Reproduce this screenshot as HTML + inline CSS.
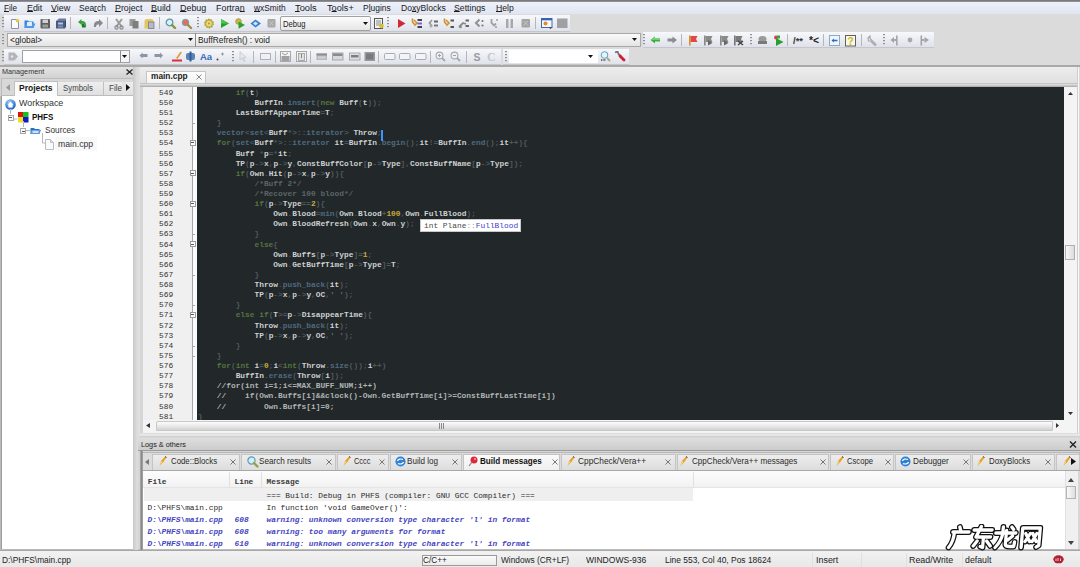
<!DOCTYPE html>
<html><head><meta charset="utf-8"><style>
html,body{margin:0;padding:0;width:1080px;height:567px;overflow:hidden;background:#dcdcdc}
body>div,body>span,body>svg{position:absolute;display:block}
span{white-space:pre}
b{font-weight:inherit}
</style></head><body>
<div style="left:0px;top:0px;width:1080px;height:2px;background:linear-gradient(#707074,#9a9a9e)"></div>
<div style="left:0px;top:2px;width:1080px;height:12px;background:linear-gradient(#eef1f9,#e0e5f2)"></div>
<span style="left:4.2px;top:3.77px;color:#1a1a1a;font-family:'Liberation Sans',sans-serif;font-size:8.3px;line-height:8.3px;transform:scaleX(0.9783);transform-origin:0 0;"><u style="text-decoration-thickness:0.8px;text-underline-offset:0px">F</u>ile</span>
<span style="left:26.7px;top:3.77px;color:#1a1a1a;font-family:'Liberation Sans',sans-serif;font-size:8.3px;line-height:8.3px;transform:scaleX(1.0690);transform-origin:0 0;"><u style="text-decoration-thickness:0.8px;text-underline-offset:0px">E</u>dit</span>
<span style="left:50.8px;top:3.77px;color:#1a1a1a;font-family:'Liberation Sans',sans-serif;font-size:8.3px;line-height:8.3px;transform:scaleX(1.0760);transform-origin:0 0;"><u style="text-decoration-thickness:0.8px;text-underline-offset:0px">V</u>iew</span>
<span style="left:78.7px;top:3.77px;color:#1a1a1a;font-family:'Liberation Sans',sans-serif;font-size:8.3px;line-height:8.3px;transform:scaleX(1.0229);transform-origin:0 0;">Sea<u style="text-decoration-thickness:0.8px;text-underline-offset:0px">r</u>ch</span>
<span style="left:114.5px;top:3.77px;color:#1a1a1a;font-family:'Liberation Sans',sans-serif;font-size:8.3px;line-height:8.3px;transform:scaleX(1.0641);transform-origin:0 0;"><u style="text-decoration-thickness:0.8px;text-underline-offset:0px">P</u>roject</span>
<span style="left:150.8px;top:3.77px;color:#1a1a1a;font-family:'Liberation Sans',sans-serif;font-size:8.3px;line-height:8.3px;transform:scaleX(1.0721);transform-origin:0 0;"><u style="text-decoration-thickness:0.8px;text-underline-offset:0px">B</u>uild</span>
<span style="left:179.8px;top:3.77px;color:#1a1a1a;font-family:'Liberation Sans',sans-serif;font-size:8.3px;line-height:8.3px;transform:scaleX(1.0748);transform-origin:0 0;"><u style="text-decoration-thickness:0.8px;text-underline-offset:0px">D</u>ebug</span>
<span style="left:215.8px;top:3.77px;color:#1a1a1a;font-family:'Liberation Sans',sans-serif;font-size:8.3px;line-height:8.3px;transform:scaleX(1.0723);transform-origin:0 0;">Fortra<u style="text-decoration-thickness:0.8px;text-underline-offset:0px">n</u></span>
<span style="left:253.7px;top:3.77px;color:#1a1a1a;font-family:'Liberation Sans',sans-serif;font-size:8.3px;line-height:8.3px;transform:scaleX(1.0077);transform-origin:0 0;"><u style="text-decoration-thickness:0.8px;text-underline-offset:0px">w</u>xSmith</span>
<span style="left:294.8px;top:3.77px;color:#1a1a1a;font-family:'Liberation Sans',sans-serif;font-size:8.3px;line-height:8.3px;transform:scaleX(1.1243);transform-origin:0 0;"><u style="text-decoration-thickness:0.8px;text-underline-offset:0px">T</u>ools</span>
<span style="left:326.5px;top:3.77px;color:#1a1a1a;font-family:'Liberation Sans',sans-serif;font-size:8.3px;line-height:8.3px;transform:scaleX(1.1059);transform-origin:0 0;">T<u style="text-decoration-thickness:0.8px;text-underline-offset:0px">o</u>ols+</span>
<span style="left:363.0px;top:3.77px;color:#1a1a1a;font-family:'Liberation Sans',sans-serif;font-size:8.3px;line-height:8.3px;transform:scaleX(1.0171);transform-origin:0 0;">P<u style="text-decoration-thickness:0.8px;text-underline-offset:0px">l</u>ugins</span>
<span style="left:400.5px;top:3.77px;color:#1a1a1a;font-family:'Liberation Sans',sans-serif;font-size:8.3px;line-height:8.3px;transform:scaleX(1.0332);transform-origin:0 0;">Do<u style="text-decoration-thickness:0.8px;text-underline-offset:0px">x</u>yBlocks</span>
<span style="left:454.3px;top:3.77px;color:#1a1a1a;font-family:'Liberation Sans',sans-serif;font-size:8.3px;line-height:8.3px;transform:scaleX(1.0467);transform-origin:0 0;"><u style="text-decoration-thickness:0.8px;text-underline-offset:0px">S</u>ettings</span>
<span style="left:495.5px;top:3.77px;color:#1a1a1a;font-family:'Liberation Sans',sans-serif;font-size:8.3px;line-height:8.3px;transform:scaleX(1.0423);transform-origin:0 0;"><u style="text-decoration-thickness:0.8px;text-underline-offset:0px">H</u>elp</span>
<div style="left:0px;top:14px;width:1080px;height:51px;background:#dbdbdb"></div>
<div style="left:4px;top:15px;width:566px;height:16px;background:linear-gradient(#f7f8fb,#e9ebf1 60%,#dfe2ea);"></div>
<div style="left:4px;top:31px;width:566px;height:1px;background:#c4c6cc"></div>
<svg style="left:2px;top:17px" width="2" height="12" viewBox="0 0 2 12"><rect x="0" y="0" width="2" height="1.2" fill="#8e9098"/><rect x="0" y="3" width="2" height="1.2" fill="#8e9098"/><rect x="0" y="6" width="2" height="1.2" fill="#8e9098"/><rect x="0" y="9" width="2" height="1.2" fill="#8e9098"/></svg>
<div style="left:7px;top:33px;width:634px;height:14px;background:linear-gradient(#fafafa,#e4e4e4);border:1px solid #a8a8a8;box-sizing:border-box"></div>
<div style="left:195px;top:33px;width:1px;height:14px;background:#8a8a8a"></div>
<svg style="left:188px;top:38px" width="5" height="3" viewBox="0 0 5 3"><path d="M0 0H5L2.5 3Z" fill="#111"/></svg>
<svg style="left:632px;top:38px" width="5" height="3" viewBox="0 0 5 3"><path d="M0 0H5L2.5 3Z" fill="#111"/></svg>
<span style="left:9.6px;top:35.97px;color:#222;font-family:'Liberation Sans',sans-serif;font-size:8.3px;line-height:8.3px;transform:scaleX(1.0112);transform-origin:0 0;">&lt;global&gt;</span>
<span style="left:198.4px;top:35.97px;color:#222;font-family:'Liberation Sans',sans-serif;font-size:8.3px;line-height:8.3px;transform:scaleX(1.0066);transform-origin:0 0;">BuffRefresh() : void</span>
<svg style="left:2px;top:34px" width="2" height="12" viewBox="0 0 2 12"><rect x="0" y="0" width="2" height="1.2" fill="#8e9098"/><rect x="0" y="3" width="2" height="1.2" fill="#8e9098"/><rect x="0" y="6" width="2" height="1.2" fill="#8e9098"/><rect x="0" y="9" width="2" height="1.2" fill="#8e9098"/></svg>
<div style="left:643px;top:32px;width:291px;height:15px;background:linear-gradient(#f7f8fb,#e9ebf1 60%,#dfe2ea);"></div>
<div style="left:643px;top:47px;width:291px;height:1px;background:#c4c6cc"></div>
<svg style="left:643px;top:34px" width="2" height="12" viewBox="0 0 2 12"><rect x="0" y="0" width="2" height="1.2" fill="#8e9098"/><rect x="0" y="3" width="2" height="1.2" fill="#8e9098"/><rect x="0" y="6" width="2" height="1.2" fill="#8e9098"/><rect x="0" y="9" width="2" height="1.2" fill="#8e9098"/></svg>
<div style="left:4px;top:49px;width:497px;height:15px;background:linear-gradient(#f7f8fb,#e9ebf1 60%,#dfe2ea);"></div>
<div style="left:4px;top:64px;width:497px;height:1px;background:#c4c6cc"></div>
<svg style="left:2px;top:51px" width="2" height="12" viewBox="0 0 2 12"><rect x="0" y="0" width="2" height="1.2" fill="#8e9098"/><rect x="0" y="3" width="2" height="1.2" fill="#8e9098"/><rect x="0" y="6" width="2" height="1.2" fill="#8e9098"/><rect x="0" y="9" width="2" height="1.2" fill="#8e9098"/></svg>
<div style="left:22px;top:50px;width:108px;height:13px;background:#fff;border:1px solid #a0a0a0;box-sizing:border-box"></div>
<div style="left:120px;top:51px;width:9px;height:11px;background:#f4f4f4;border-left:1px solid #909090;box-sizing:border-box"></div>
<svg style="left:122px;top:55px" width="5" height="3" viewBox="0 0 5 3"><path d="M0 0H5L2.5 3Z" fill="#111"/></svg>
<div style="left:503px;top:49px;width:126px;height:15px;background:linear-gradient(#f7f8fb,#e9ebf1 60%,#dfe2ea);"></div>
<div style="left:503px;top:64px;width:126px;height:1px;background:#c4c6cc"></div>
<svg style="left:505px;top:51px" width="2" height="12" viewBox="0 0 2 12"><rect x="0" y="0" width="2" height="1.2" fill="#8e9098"/><rect x="0" y="3" width="2" height="1.2" fill="#8e9098"/><rect x="0" y="6" width="2" height="1.2" fill="#8e9098"/><rect x="0" y="9" width="2" height="1.2" fill="#8e9098"/></svg>
<div style="left:509px;top:50px;width:89px;height:13px;background:#fff"></div>
<svg style="left:588px;top:55px" width="5" height="3" viewBox="0 0 5 3"><path d="M0 0H5L2.5 3Z" fill="#111"/></svg>
<div style="left:0px;top:65px;width:1080px;height:2px;background:#a9a9a9"></div>
<div style="left:0px;top:67px;width:140px;height:484px;background:#d4d4d4"></div>
<div style="left:0px;top:67px;width:134px;height:11px;background:linear-gradient(#e4e4e4,#d2d2d2)"></div>
<span style="left:1.9px;top:67.92px;color:#333;font-family:'Liberation Sans',sans-serif;font-size:7.3px;line-height:7.3px;transform:scaleX(0.9908);transform-origin:0 0;">Management</span>
<svg style="left:126px;top:69px" width="7" height="6" viewBox="0 0 7 6"><path d="M0.5 0.5L6.5 5.5M6.5 0.5L0.5 5.5" stroke="#222" stroke-width="1.3"/></svg>
<div style="left:1px;top:78px;width:133px;height:18px;background:#d8d8d8;border:1px solid #bcbcbc;box-sizing:border-box"></div>
<div style="left:14px;top:81px;width:44px;height:15px;background:#fbfbfb;border:1px solid #c0c0c0;border-bottom:none;box-sizing:border-box"></div>
<div style="left:58px;top:82px;width:46px;height:13px;background:linear-gradient(#eeeeee,#e0e0e0);border-right:1px solid #c0c0c0;box-sizing:border-box"></div>
<div style="left:104px;top:82px;width:29px;height:13px;background:linear-gradient(#eeeeee,#e0e0e0)"></div>
<svg style="left:6px;top:84px" width="4" height="7" viewBox="0 0 4 7"><path d="M4 0L0 3.5L4 7Z" fill="#999"/></svg>
<svg style="left:126px;top:84px" width="4" height="7" viewBox="0 0 4 7"><path d="M0 0L4 3.5L0 7Z" fill="#111"/></svg>
<span style="left:19.2px;top:83.57px;color:#1a1a1a;font-family:'Liberation Sans',sans-serif;font-size:8.3px;line-height:8.3px;font-weight:bold;transform:scaleX(1.0229);transform-origin:0 0;">Projects</span>
<span style="left:63.3px;top:83.57px;color:#444;font-family:'Liberation Sans',sans-serif;font-size:8.3px;line-height:8.3px;transform:scaleX(0.9426);transform-origin:0 0;">Symbols</span>
<span style="left:108.5px;top:83.57px;color:#444;font-family:'Liberation Sans',sans-serif;font-size:8.3px;line-height:8.3px;transform:scaleX(0.9697);transform-origin:0 0;">Files</span>
<div style="left:122px;top:82px;width:4px;height:13px;background:#e4e4e4"></div>
<div style="left:2px;top:96px;width:131px;height:453px;background:#fff"></div>
<div style="left:0px;top:96px;width:2px;height:455px;background:linear-gradient(90deg,#c8c8c8,#8e8e8e)"></div>
<div style="left:0px;top:549px;width:140px;height:2px;background:linear-gradient(#b0b0b0,#d8d8d8)"></div>
<div style="left:133px;top:67px;width:7px;height:484px;background:linear-gradient(90deg,#c8c8c8,#dadada 50%,#e2e2e2)"></div>
<div style="left:139.5px;top:67px;width:3.5px;height:370px;background:linear-gradient(90deg,#a0a0a0,#7e7e7e,#9a9a9a)"></div>
<span style="left:18.9px;top:99.48px;color:#333;font-family:'Liberation Sans',sans-serif;font-size:9px;line-height:9px;transform:scaleX(0.9875);transform-origin:0 0;">Workspace</span>
<span style="left:31.9px;top:112.74px;color:#111;font-family:'Liberation Sans',sans-serif;font-size:8.7px;line-height:8.7px;font-weight:bold;transform:scaleX(0.9192);transform-origin:0 0;">PHFS</span>
<span style="left:45px;top:126.28px;color:#333;font-family:'Liberation Sans',sans-serif;font-size:9px;line-height:9px;transform:scaleX(0.9143);transform-origin:0 0;">Sources</span>
<div style="left:55px;top:137px;width:42px;height:14px;background:#f8f8f8"></div>
<span style="left:57.8px;top:139.58px;color:#333;font-family:'Liberation Sans',sans-serif;font-size:9px;line-height:9px;transform:scaleX(0.9636);transform-origin:0 0;">main.cpp</span>
<div style="left:140px;top:67px;width:940px;height:370px;background:#d6d6d6"></div>
<div style="left:140px;top:67px;width:940px;height:19px;background:linear-gradient(#ededed,#dedede)"></div>
<div style="left:146px;top:71px;width:60px;height:14px;background:linear-gradient(#fdfdfd,#f1f1f1);border:1px solid #c6c6c6;border-bottom:none;box-sizing:border-box"></div>
<span style="left:150.7px;top:72.08px;color:#202020;font-family:'Liberation Sans',sans-serif;font-size:9px;line-height:9px;font-weight:bold;transform:scaleX(0.9262);transform-origin:0 0;">main.cpp</span>
<svg style="left:196px;top:74px" width="6" height="6" viewBox="0 0 6 6"><path d="M0.5 0.5L5.5 5.5M5.5 0.5L0.5 5.5" stroke="#888" stroke-width="1"/></svg>
<div style="left:140px;top:83px;width:940px;height:1px;background:#c4c4c4"></div>
<div style="left:140px;top:84px;width:940px;height:3px;background:linear-gradient(#e6e6e6,#a8a8a8)"></div>
<div style="left:143px;top:87px;width:49px;height:333px;background:#f0f0f0"></div>
<div style="left:192px;top:87px;width:1px;height:333px;background:#a8a8a8"></div>
<div style="left:193px;top:87px;width:4px;height:333px;background:#fcfcfc"></div>
<div style="left:197px;top:87px;width:867px;height:333px;background:#222729"></div>
<div style="left:1064px;top:87px;width:13px;height:346px;background:#f4f4f4"></div>
<div style="left:1077px;top:67px;width:3px;height:370px;background:linear-gradient(90deg,#b8b8b8,#f8f8f8,#c8c8c8)"></div>
<span style="left:159px;top:88.78px;color:#333;font-family:'Liberation Mono',monospace;font-size:7.85px;line-height:7.85px;">549</span>
<span style="left:198px;top:88.78px;color:#ddd;font-family:'Liberation Mono',monospace;font-size:7.85px;line-height:7.85px;font-weight:bold;">        <b style="color:#56743f">if</b><b style="color:#4e595c">(</b><b style="color:#cdd0d0">t</b><b style="color:#4e595c">)</b></span>
<span style="left:159px;top:98.9px;color:#333;font-family:'Liberation Mono',monospace;font-size:7.85px;line-height:7.85px;">550</span>
<span style="left:198px;top:98.9px;color:#ddd;font-family:'Liberation Mono',monospace;font-size:7.85px;line-height:7.85px;font-weight:bold;">            <b style="color:#cdd0d0">BuffIn</b><b style="color:#4e595c">.</b><b style="color:#4e6a80">insert</b><b style="color:#4e595c">(</b><b style="color:#56743f">new</b> <b style="color:#cdd0d0">Buff</b><b style="color:#4e595c">(</b><b style="color:#cdd0d0">t</b><b style="color:#4e595c">)</b><b style="color:#4e595c">)</b><b style="color:#4e595c">;</b></span>
<span style="left:159px;top:109.02px;color:#333;font-family:'Liberation Mono',monospace;font-size:7.85px;line-height:7.85px;">551</span>
<span style="left:198px;top:109.02px;color:#ddd;font-family:'Liberation Mono',monospace;font-size:7.85px;line-height:7.85px;font-weight:bold;">        <b style="color:#cdd0d0">LastBuffAppearTime</b><b style="color:#4e595c">=</b><b style="color:#cdd0d0">T</b><b style="color:#4e595c">;</b></span>
<span style="left:159px;top:119.14px;color:#333;font-family:'Liberation Mono',monospace;font-size:7.85px;line-height:7.85px;">552</span>
<span style="left:198px;top:119.14px;color:#ddd;font-family:'Liberation Mono',monospace;font-size:7.85px;line-height:7.85px;font-weight:bold;">    <b style="color:#4e595c">}</b></span>
<span style="left:159px;top:129.26px;color:#333;font-family:'Liberation Mono',monospace;font-size:7.85px;line-height:7.85px;">553</span>
<span style="left:198px;top:129.26px;color:#ddd;font-family:'Liberation Mono',monospace;font-size:7.85px;line-height:7.85px;font-weight:bold;">    <b style="color:#4e6a80">vector</b><b style="color:#4e595c">&lt;</b><b style="color:#4e6a80">set</b><b style="color:#4e595c">&lt;</b><b style="color:#cdd0d0">Buff</b><b style="color:#4e595c">*</b><b style="color:#4e595c">&gt;</b><b style="color:#4e595c">:</b><b style="color:#4e595c">:</b><b style="color:#4e6a80">iterator</b><b style="color:#4e595c">&gt;</b> <b style="color:#cdd0d0">Throw</b><b style="color:#4e595c">;</b></span>
<span style="left:159px;top:139.38px;color:#333;font-family:'Liberation Mono',monospace;font-size:7.85px;line-height:7.85px;">554</span>
<span style="left:198px;top:139.38px;color:#ddd;font-family:'Liberation Mono',monospace;font-size:7.85px;line-height:7.85px;font-weight:bold;">    <b style="color:#56743f">for</b><b style="color:#4e595c">(</b><b style="color:#4e6a80">set</b><b style="color:#4e595c">&lt;</b><b style="color:#cdd0d0">Buff</b><b style="color:#4e595c">*</b><b style="color:#4e595c">&gt;</b><b style="color:#4e595c">:</b><b style="color:#4e595c">:</b><b style="color:#4e6a80">iterator</b> <b style="color:#cdd0d0">it</b><b style="color:#4e595c">=</b><b style="color:#cdd0d0">BuffIn</b><b style="color:#4e595c">.</b><b style="color:#4e6a80">begin</b><b style="color:#4e595c">(</b><b style="color:#4e595c">)</b><b style="color:#4e595c">;</b><b style="color:#cdd0d0">it</b><b style="color:#4e595c">!</b><b style="color:#4e595c">=</b><b style="color:#cdd0d0">BuffIn</b><b style="color:#4e595c">.</b><b style="color:#4e6a80">end</b><b style="color:#4e595c">(</b><b style="color:#4e595c">)</b><b style="color:#4e595c">;</b><b style="color:#cdd0d0">it</b><b style="color:#4e595c">+</b><b style="color:#4e595c">+</b><b style="color:#4e595c">)</b><b style="color:#4e595c">{</b></span>
<span style="left:159px;top:149.5px;color:#333;font-family:'Liberation Mono',monospace;font-size:7.85px;line-height:7.85px;">555</span>
<span style="left:198px;top:149.5px;color:#ddd;font-family:'Liberation Mono',monospace;font-size:7.85px;line-height:7.85px;font-weight:bold;">        <b style="color:#cdd0d0">Buff</b> <b style="color:#4e595c">*</b><b style="color:#cdd0d0">p</b><b style="color:#4e595c">=</b><b style="color:#4e595c">*</b><b style="color:#cdd0d0">it</b><b style="color:#4e595c">;</b></span>
<span style="left:159px;top:159.62px;color:#333;font-family:'Liberation Mono',monospace;font-size:7.85px;line-height:7.85px;">556</span>
<span style="left:198px;top:159.62px;color:#ddd;font-family:'Liberation Mono',monospace;font-size:7.85px;line-height:7.85px;font-weight:bold;">        <b style="color:#cdd0d0">TP</b><b style="color:#4e595c">(</b><b style="color:#cdd0d0">p</b><b style="color:#4e595c">-</b><b style="color:#4e595c">&gt;</b><b style="color:#cdd0d0">x</b><b style="color:#4e595c">,</b><b style="color:#cdd0d0">p</b><b style="color:#4e595c">-</b><b style="color:#4e595c">&gt;</b><b style="color:#cdd0d0">y</b><b style="color:#4e595c">,</b><b style="color:#cdd0d0">ConstBuffColor</b><b style="color:#4e595c">[</b><b style="color:#cdd0d0">p</b><b style="color:#4e595c">-</b><b style="color:#4e595c">&gt;</b><b style="color:#cdd0d0">Type</b><b style="color:#4e595c">]</b><b style="color:#4e595c">,</b><b style="color:#cdd0d0">ConstBuffName</b><b style="color:#4e595c">[</b><b style="color:#cdd0d0">p</b><b style="color:#4e595c">-</b><b style="color:#4e595c">&gt;</b><b style="color:#cdd0d0">Type</b><b style="color:#4e595c">]</b><b style="color:#4e595c">)</b><b style="color:#4e595c">;</b></span>
<span style="left:159px;top:169.74px;color:#333;font-family:'Liberation Mono',monospace;font-size:7.85px;line-height:7.85px;">557</span>
<span style="left:198px;top:169.74px;color:#ddd;font-family:'Liberation Mono',monospace;font-size:7.85px;line-height:7.85px;font-weight:bold;">        <b style="color:#56743f">if</b><b style="color:#4e595c">(</b><b style="color:#cdd0d0">Own</b><b style="color:#4e595c">.</b><b style="color:#cdd0d0">Hit</b><b style="color:#4e595c">(</b><b style="color:#cdd0d0">p</b><b style="color:#4e595c">-</b><b style="color:#4e595c">&gt;</b><b style="color:#cdd0d0">x</b><b style="color:#4e595c">,</b><b style="color:#cdd0d0">p</b><b style="color:#4e595c">-</b><b style="color:#4e595c">&gt;</b><b style="color:#cdd0d0">y</b><b style="color:#4e595c">)</b><b style="color:#4e595c">)</b><b style="color:#4e595c">{</b></span>
<span style="left:159px;top:179.86px;color:#333;font-family:'Liberation Mono',monospace;font-size:7.85px;line-height:7.85px;">558</span>
<span style="left:198px;top:179.86px;color:#ddd;font-family:'Liberation Mono',monospace;font-size:7.85px;line-height:7.85px;font-weight:bold;">            <b style="color:#5c6567">/*Buff 2*/</b></span>
<span style="left:159px;top:189.98px;color:#333;font-family:'Liberation Mono',monospace;font-size:7.85px;line-height:7.85px;">559</span>
<span style="left:198px;top:189.98px;color:#ddd;font-family:'Liberation Mono',monospace;font-size:7.85px;line-height:7.85px;font-weight:bold;">            <b style="color:#5c6567">/*Recover 100 blood*/</b></span>
<span style="left:159px;top:200.1px;color:#333;font-family:'Liberation Mono',monospace;font-size:7.85px;line-height:7.85px;">560</span>
<span style="left:198px;top:200.1px;color:#ddd;font-family:'Liberation Mono',monospace;font-size:7.85px;line-height:7.85px;font-weight:bold;">            <b style="color:#56743f">if</b><b style="color:#4e595c">(</b><b style="color:#cdd0d0">p</b><b style="color:#4e595c">-</b><b style="color:#4e595c">&gt;</b><b style="color:#cdd0d0">Type</b><b style="color:#4e595c">=</b><b style="color:#4e595c">=</b><b style="color:#c9a93a">2</b><b style="color:#4e595c">)</b><b style="color:#4e595c">{</b></span>
<span style="left:159px;top:210.22px;color:#333;font-family:'Liberation Mono',monospace;font-size:7.85px;line-height:7.85px;">561</span>
<span style="left:198px;top:210.22px;color:#ddd;font-family:'Liberation Mono',monospace;font-size:7.85px;line-height:7.85px;font-weight:bold;">                <b style="color:#cdd0d0">Own</b><b style="color:#4e595c">.</b><b style="color:#cdd0d0">Blood</b><b style="color:#4e595c">=</b><b style="color:#4e6a80">min</b><b style="color:#4e595c">(</b><b style="color:#cdd0d0">Own</b><b style="color:#4e595c">.</b><b style="color:#cdd0d0">Blood</b><b style="color:#4e595c">+</b><b style="color:#c9a93a">100</b><b style="color:#4e595c">,</b><b style="color:#cdd0d0">Own</b><b style="color:#4e595c">.</b><b style="color:#cdd0d0">FullBlood</b><b style="color:#4e595c">)</b><b style="color:#4e595c">;</b></span>
<span style="left:159px;top:220.34px;color:#333;font-family:'Liberation Mono',monospace;font-size:7.85px;line-height:7.85px;">562</span>
<span style="left:198px;top:220.34px;color:#ddd;font-family:'Liberation Mono',monospace;font-size:7.85px;line-height:7.85px;font-weight:bold;">                <b style="color:#cdd0d0">Own</b><b style="color:#4e595c">.</b><b style="color:#cdd0d0">BloodRefresh</b><b style="color:#4e595c">(</b><b style="color:#cdd0d0">Own</b><b style="color:#4e595c">.</b><b style="color:#cdd0d0">x</b><b style="color:#4e595c">,</b><b style="color:#cdd0d0">Own</b><b style="color:#4e595c">.</b><b style="color:#cdd0d0">y</b><b style="color:#4e595c">)</b><b style="color:#4e595c">;</b></span>
<span style="left:159px;top:230.46px;color:#333;font-family:'Liberation Mono',monospace;font-size:7.85px;line-height:7.85px;">563</span>
<span style="left:198px;top:230.46px;color:#ddd;font-family:'Liberation Mono',monospace;font-size:7.85px;line-height:7.85px;font-weight:bold;">            <b style="color:#4e595c">}</b></span>
<span style="left:159px;top:240.58px;color:#333;font-family:'Liberation Mono',monospace;font-size:7.85px;line-height:7.85px;">564</span>
<span style="left:198px;top:240.58px;color:#ddd;font-family:'Liberation Mono',monospace;font-size:7.85px;line-height:7.85px;font-weight:bold;">            <b style="color:#56743f">else</b><b style="color:#4e595c">{</b></span>
<span style="left:159px;top:250.7px;color:#333;font-family:'Liberation Mono',monospace;font-size:7.85px;line-height:7.85px;">565</span>
<span style="left:198px;top:250.7px;color:#ddd;font-family:'Liberation Mono',monospace;font-size:7.85px;line-height:7.85px;font-weight:bold;">                <b style="color:#cdd0d0">Own</b><b style="color:#4e595c">.</b><b style="color:#cdd0d0">Buffs</b><b style="color:#4e595c">[</b><b style="color:#cdd0d0">p</b><b style="color:#4e595c">-</b><b style="color:#4e595c">&gt;</b><b style="color:#cdd0d0">Type</b><b style="color:#4e595c">]</b><b style="color:#4e595c">=</b><b style="color:#c9a93a">1</b><b style="color:#4e595c">;</b></span>
<span style="left:159px;top:260.82px;color:#333;font-family:'Liberation Mono',monospace;font-size:7.85px;line-height:7.85px;">566</span>
<span style="left:198px;top:260.82px;color:#ddd;font-family:'Liberation Mono',monospace;font-size:7.85px;line-height:7.85px;font-weight:bold;">                <b style="color:#cdd0d0">Own</b><b style="color:#4e595c">.</b><b style="color:#cdd0d0">GetBuffTime</b><b style="color:#4e595c">[</b><b style="color:#cdd0d0">p</b><b style="color:#4e595c">-</b><b style="color:#4e595c">&gt;</b><b style="color:#cdd0d0">Type</b><b style="color:#4e595c">]</b><b style="color:#4e595c">=</b><b style="color:#cdd0d0">T</b><b style="color:#4e595c">;</b></span>
<span style="left:159px;top:270.94px;color:#333;font-family:'Liberation Mono',monospace;font-size:7.85px;line-height:7.85px;">567</span>
<span style="left:198px;top:270.94px;color:#ddd;font-family:'Liberation Mono',monospace;font-size:7.85px;line-height:7.85px;font-weight:bold;">            <b style="color:#4e595c">}</b></span>
<span style="left:159px;top:281.06px;color:#333;font-family:'Liberation Mono',monospace;font-size:7.85px;line-height:7.85px;">568</span>
<span style="left:198px;top:281.06px;color:#ddd;font-family:'Liberation Mono',monospace;font-size:7.85px;line-height:7.85px;font-weight:bold;">            <b style="color:#cdd0d0">Throw</b><b style="color:#4e595c">.</b><b style="color:#4e6a80">push_back</b><b style="color:#4e595c">(</b><b style="color:#cdd0d0">it</b><b style="color:#4e595c">)</b><b style="color:#4e595c">;</b></span>
<span style="left:159px;top:291.18px;color:#333;font-family:'Liberation Mono',monospace;font-size:7.85px;line-height:7.85px;">569</span>
<span style="left:198px;top:291.18px;color:#ddd;font-family:'Liberation Mono',monospace;font-size:7.85px;line-height:7.85px;font-weight:bold;">            <b style="color:#cdd0d0">TP</b><b style="color:#4e595c">(</b><b style="color:#cdd0d0">p</b><b style="color:#4e595c">-</b><b style="color:#4e595c">&gt;</b><b style="color:#cdd0d0">x</b><b style="color:#4e595c">,</b><b style="color:#cdd0d0">p</b><b style="color:#4e595c">-</b><b style="color:#4e595c">&gt;</b><b style="color:#cdd0d0">y</b><b style="color:#4e595c">,</b><b style="color:#cdd0d0">OC</b><b style="color:#4e595c">,</b><b style="color:#6a7070">&#x27; &#x27;</b><b style="color:#4e595c">)</b><b style="color:#4e595c">;</b></span>
<span style="left:159px;top:301.3px;color:#333;font-family:'Liberation Mono',monospace;font-size:7.85px;line-height:7.85px;">570</span>
<span style="left:198px;top:301.3px;color:#ddd;font-family:'Liberation Mono',monospace;font-size:7.85px;line-height:7.85px;font-weight:bold;">        <b style="color:#4e595c">}</b></span>
<span style="left:159px;top:311.42px;color:#333;font-family:'Liberation Mono',monospace;font-size:7.85px;line-height:7.85px;">571</span>
<span style="left:198px;top:311.42px;color:#ddd;font-family:'Liberation Mono',monospace;font-size:7.85px;line-height:7.85px;font-weight:bold;">        <b style="color:#56743f">else</b> <b style="color:#56743f">if</b><b style="color:#4e595c">(</b><b style="color:#cdd0d0">T</b><b style="color:#4e595c">&gt;</b><b style="color:#4e595c">=</b><b style="color:#cdd0d0">p</b><b style="color:#4e595c">-</b><b style="color:#4e595c">&gt;</b><b style="color:#cdd0d0">DisappearTime</b><b style="color:#4e595c">)</b><b style="color:#4e595c">{</b></span>
<span style="left:159px;top:321.54px;color:#333;font-family:'Liberation Mono',monospace;font-size:7.85px;line-height:7.85px;">572</span>
<span style="left:198px;top:321.54px;color:#ddd;font-family:'Liberation Mono',monospace;font-size:7.85px;line-height:7.85px;font-weight:bold;">            <b style="color:#cdd0d0">Throw</b><b style="color:#4e595c">.</b><b style="color:#4e6a80">push_back</b><b style="color:#4e595c">(</b><b style="color:#cdd0d0">it</b><b style="color:#4e595c">)</b><b style="color:#4e595c">;</b></span>
<span style="left:159px;top:331.66px;color:#333;font-family:'Liberation Mono',monospace;font-size:7.85px;line-height:7.85px;">573</span>
<span style="left:198px;top:331.66px;color:#ddd;font-family:'Liberation Mono',monospace;font-size:7.85px;line-height:7.85px;font-weight:bold;">            <b style="color:#cdd0d0">TP</b><b style="color:#4e595c">(</b><b style="color:#cdd0d0">p</b><b style="color:#4e595c">-</b><b style="color:#4e595c">&gt;</b><b style="color:#cdd0d0">x</b><b style="color:#4e595c">,</b><b style="color:#cdd0d0">p</b><b style="color:#4e595c">-</b><b style="color:#4e595c">&gt;</b><b style="color:#cdd0d0">y</b><b style="color:#4e595c">,</b><b style="color:#cdd0d0">OC</b><b style="color:#4e595c">,</b><b style="color:#6a7070">&#x27; &#x27;</b><b style="color:#4e595c">)</b><b style="color:#4e595c">;</b></span>
<span style="left:159px;top:341.78px;color:#333;font-family:'Liberation Mono',monospace;font-size:7.85px;line-height:7.85px;">574</span>
<span style="left:198px;top:341.78px;color:#ddd;font-family:'Liberation Mono',monospace;font-size:7.85px;line-height:7.85px;font-weight:bold;">        <b style="color:#4e595c">}</b></span>
<span style="left:159px;top:351.9px;color:#333;font-family:'Liberation Mono',monospace;font-size:7.85px;line-height:7.85px;">575</span>
<span style="left:198px;top:351.9px;color:#ddd;font-family:'Liberation Mono',monospace;font-size:7.85px;line-height:7.85px;font-weight:bold;">    <b style="color:#4e595c">}</b></span>
<span style="left:159px;top:362.02px;color:#333;font-family:'Liberation Mono',monospace;font-size:7.85px;line-height:7.85px;">576</span>
<span style="left:198px;top:362.02px;color:#ddd;font-family:'Liberation Mono',monospace;font-size:7.85px;line-height:7.85px;font-weight:bold;">    <b style="color:#56743f">for</b><b style="color:#4e595c">(</b><b style="color:#56743f">int</b> <b style="color:#cdd0d0">i</b><b style="color:#4e595c">=</b><b style="color:#c9a93a">0</b><b style="color:#4e595c">;</b><b style="color:#cdd0d0">i</b><b style="color:#4e595c">&lt;</b><b style="color:#56743f">int</b><b style="color:#4e595c">(</b><b style="color:#cdd0d0">Throw</b><b style="color:#4e595c">.</b><b style="color:#4e6a80">size</b><b style="color:#4e595c">(</b><b style="color:#4e595c">)</b><b style="color:#4e595c">)</b><b style="color:#4e595c">;</b><b style="color:#cdd0d0">i</b><b style="color:#4e595c">+</b><b style="color:#4e595c">+</b><b style="color:#4e595c">)</b></span>
<span style="left:159px;top:372.14px;color:#333;font-family:'Liberation Mono',monospace;font-size:7.85px;line-height:7.85px;">577</span>
<span style="left:198px;top:372.14px;color:#ddd;font-family:'Liberation Mono',monospace;font-size:7.85px;line-height:7.85px;font-weight:bold;">        <b style="color:#cdd0d0">BuffIn</b><b style="color:#4e595c">.</b><b style="color:#4e6a80">erase</b><b style="color:#4e595c">(</b><b style="color:#cdd0d0">Throw</b><b style="color:#4e595c">[</b><b style="color:#cdd0d0">i</b><b style="color:#4e595c">]</b><b style="color:#4e595c">)</b><b style="color:#4e595c">;</b></span>
<span style="left:159px;top:382.26px;color:#333;font-family:'Liberation Mono',monospace;font-size:7.85px;line-height:7.85px;">578</span>
<span style="left:198px;top:382.26px;color:#ddd;font-family:'Liberation Mono',monospace;font-size:7.85px;line-height:7.85px;font-weight:bold;"><b style="color:#b0b4b4">    //for(int i=1;i&lt;=MAX_BUFF_NUM;i++)</b></span>
<span style="left:159px;top:392.38px;color:#333;font-family:'Liberation Mono',monospace;font-size:7.85px;line-height:7.85px;">579</span>
<span style="left:198px;top:392.38px;color:#ddd;font-family:'Liberation Mono',monospace;font-size:7.85px;line-height:7.85px;font-weight:bold;"><b style="color:#b0b4b4">    //    if(Own.Buffs[i]&amp;&amp;clock()-Own.GetBuffTime[i]&gt;=ConstBuffLastTime[i])</b></span>
<span style="left:159px;top:402.5px;color:#333;font-family:'Liberation Mono',monospace;font-size:7.85px;line-height:7.85px;">580</span>
<span style="left:198px;top:402.5px;color:#ddd;font-family:'Liberation Mono',monospace;font-size:7.85px;line-height:7.85px;font-weight:bold;"><b style="color:#b0b4b4">    //        Own.Buffs[i]=0;</b></span>
<span style="left:159px;top:412.62px;color:#333;font-family:'Liberation Mono',monospace;font-size:7.85px;line-height:7.85px;">581</span>
<span style="left:198px;top:412.62px;color:#ddd;font-family:'Liberation Mono',monospace;font-size:7.85px;line-height:7.85px;font-weight:bold;"><b style="color:#4e595c">}</b></span>
<div style="left:189.5px;top:139.9px;width:6px;height:6px;background:#fff;border:1px solid #9a9a9a;box-sizing:border-box"></div>
<div style="left:191px;top:142.4px;width:3px;height:1px;background:#555"></div>
<div style="left:189.5px;top:170.3px;width:6px;height:6px;background:#fff;border:1px solid #9a9a9a;box-sizing:border-box"></div>
<div style="left:191px;top:172.8px;width:3px;height:1px;background:#555"></div>
<div style="left:189.5px;top:200.6px;width:6px;height:6px;background:#fff;border:1px solid #9a9a9a;box-sizing:border-box"></div>
<div style="left:191px;top:203.1px;width:3px;height:1px;background:#555"></div>
<div style="left:189.5px;top:241.1px;width:6px;height:6px;background:#fff;border:1px solid #9a9a9a;box-sizing:border-box"></div>
<div style="left:191px;top:243.6px;width:3px;height:1px;background:#555"></div>
<div style="left:189.5px;top:311.9px;width:6px;height:6px;background:#fff;border:1px solid #9a9a9a;box-sizing:border-box"></div>
<div style="left:191px;top:314.4px;width:3px;height:1px;background:#555"></div>
<div style="left:192px;top:122.9px;width:3px;height:1px;background:#a8a8a8"></div>
<div style="left:192px;top:234.2px;width:3px;height:1px;background:#a8a8a8"></div>
<div style="left:192px;top:274.7px;width:3px;height:1px;background:#a8a8a8"></div>
<div style="left:192px;top:305.0px;width:3px;height:1px;background:#a8a8a8"></div>
<div style="left:192px;top:345.5px;width:3px;height:1px;background:#a8a8a8"></div>
<div style="left:192px;top:355.6px;width:3px;height:1px;background:#a8a8a8"></div>
<div style="left:420px;top:219px;width:101px;height:13px;background:#fff;border:1px solid #c8c8c8;box-sizing:border-box"></div>
<span style="left:424px;top:222.18px;color:#1a1a1a;font-family:'Liberation Mono',monospace;font-size:7.85px;line-height:7.85px;"><b style="color:#4a4a4a">int Plane</b><b style="color:#999">::</b><b style="color:#4040c8">FullBlood</b></span>
<div style="left:380.5px;top:129.5px;width:2px;height:11px;background:#3c94ff"></div>
<div style="left:143px;top:420px;width:921px;height:13px;background:#f4f4f4"></div>
<div style="left:155.5px;top:420.5px;width:897px;height:10px;background:linear-gradient(#fbfbfb,#ececec 45%,#d2d2d2);border:1px solid #c8c8c8;border-radius:2px 0 0 0;box-sizing:border-box"></div>
<div style="left:439px;top:422.5px;width:1px;height:6px;background:#888"></div>
<div style="left:441px;top:422.5px;width:1px;height:6px;background:#888"></div>
<div style="left:443px;top:422.5px;width:1px;height:6px;background:#888"></div>
<svg style="left:1056px;top:423px" width="3" height="5" viewBox="0 0 3 5"><path d="M0 0L3 2.5L0 5Z" fill="#333"/></svg>
<svg style="left:146px;top:423px" width="4" height="5" viewBox="0 0 4 5"><path d="M4 0L0 2.5L4 5Z" fill="#333"/></svg>
<svg style="left:1068px;top:91.5px" width="5" height="3" viewBox="0 0 5 3"><path d="M0 3L2.5 0L5 3Z" fill="#333"/></svg>
<svg style="left:1068px;top:412px" width="5" height="3" viewBox="0 0 5 3"><path d="M0 0L2.5 3L5 0Z" fill="#333"/></svg>
<div style="left:1065px;top:245px;width:10px;height:15px;background:linear-gradient(90deg,#f8f8f8,#dcdcdc);border:1px solid #b0b0b0;box-sizing:border-box"></div>
<div style="left:140px;top:433px;width:940px;height:4px;background:linear-gradient(#d8d8d8,#eeeeee,#c8c8c8)"></div>
<div style="left:138px;top:437px;width:942px;height:114px;background:#d6d6d6"></div>
<div style="left:138px;top:438px;width:942px;height:12px;background:linear-gradient(#dedede,#cccccc)"></div>
<span style="left:141px;top:440.61px;color:#222;font-family:'Liberation Sans',sans-serif;font-size:7.2px;line-height:7.2px;transform:scaleX(1.0144);transform-origin:0 0;">Logs &amp; others</span>
<svg style="left:1069px;top:441px" width="8" height="7" viewBox="0 0 8 7"><path d="M1 0.5L7 6.5M7 0.5L1 6.5" stroke="#222" stroke-width="1.4"/></svg>
<div style="left:138px;top:450px;width:942px;height:1px;background:#9c9c9c"></div>
<div style="left:140px;top:452px;width:940px;height:19px;background:#dcdcdc;border:1px solid #b8b8b8;box-sizing:border-box"></div>
<div style="left:140px;top:469.5px;width:940px;height:1.5px;background:#a8a8a8"></div>
<div style="left:152px;top:454px;width:88px;height:16px;background:linear-gradient(#ededed,#dddddd);border:1px solid #c4c4c4;border-bottom:none;box-sizing:border-box"></div>
<span style="left:170.8px;top:456.78px;color:#2a2a2a;font-family:'Liberation Sans',sans-serif;font-size:9px;line-height:9px;transform:scaleX(0.8693);transform-origin:0 0;">Code::Blocks</span>
<svg style="left:230px;top:459px" width="6" height="6" viewBox="0 0 6 6"><path d="M0.5 0.5L5.5 5.5M5.5 0.5L0.5 5.5" stroke="#777" stroke-width="1"/></svg>
<div style="left:241px;top:454px;width:95px;height:16px;background:linear-gradient(#ededed,#dddddd);border:1px solid #c4c4c4;border-bottom:none;box-sizing:border-box"></div>
<span style="left:259px;top:456.78px;color:#2a2a2a;font-family:'Liberation Sans',sans-serif;font-size:9px;line-height:9px;transform:scaleX(0.9039);transform-origin:0 0;">Search results</span>
<svg style="left:326px;top:459px" width="6" height="6" viewBox="0 0 6 6"><path d="M0.5 0.5L5.5 5.5M5.5 0.5L0.5 5.5" stroke="#777" stroke-width="1"/></svg>
<div style="left:337px;top:454px;width:52px;height:16px;background:linear-gradient(#ededed,#dddddd);border:1px solid #c4c4c4;border-bottom:none;box-sizing:border-box"></div>
<span style="left:354px;top:456.78px;color:#2a2a2a;font-family:'Liberation Sans',sans-serif;font-size:9px;line-height:9px;transform:scaleX(0.8250);transform-origin:0 0;">Cccc</span>
<svg style="left:379px;top:459px" width="6" height="6" viewBox="0 0 6 6"><path d="M0.5 0.5L5.5 5.5M5.5 0.5L0.5 5.5" stroke="#777" stroke-width="1"/></svg>
<div style="left:390px;top:454px;width:72px;height:16px;background:linear-gradient(#ededed,#dddddd);border:1px solid #c4c4c4;border-bottom:none;box-sizing:border-box"></div>
<span style="left:407px;top:456.78px;color:#2a2a2a;font-family:'Liberation Sans',sans-serif;font-size:9px;line-height:9px;transform:scaleX(0.8977);transform-origin:0 0;">Build log</span>
<svg style="left:452px;top:459px" width="6" height="6" viewBox="0 0 6 6"><path d="M0.5 0.5L5.5 5.5M5.5 0.5L0.5 5.5" stroke="#777" stroke-width="1"/></svg>
<div style="left:463px;top:454px;width:97px;height:16px;background:linear-gradient(#fafafa,#efefef);border:1px solid #c4c4c4;border-bottom:none;box-sizing:border-box"></div>
<span style="left:480px;top:456.78px;color:#111;font-family:'Liberation Sans',sans-serif;font-size:9px;line-height:9px;font-weight:bold;transform:scaleX(0.9003);transform-origin:0 0;">Build messages</span>
<svg style="left:552px;top:459px" width="6" height="6" viewBox="0 0 6 6"><path d="M0.5 0.5L5.5 5.5M5.5 0.5L0.5 5.5" stroke="#777" stroke-width="1"/></svg>
<div style="left:561px;top:454px;width:115px;height:16px;background:linear-gradient(#ededed,#dddddd);border:1px solid #c4c4c4;border-bottom:none;box-sizing:border-box"></div>
<span style="left:578px;top:456.78px;color:#2a2a2a;font-family:'Liberation Sans',sans-serif;font-size:9px;line-height:9px;transform:scaleX(0.9246);transform-origin:0 0;">CppCheck/Vera++</span>
<svg style="left:665px;top:459px" width="6" height="6" viewBox="0 0 6 6"><path d="M0.5 0.5L5.5 5.5M5.5 0.5L0.5 5.5" stroke="#777" stroke-width="1"/></svg>
<div style="left:677px;top:454px;width:152px;height:16px;background:linear-gradient(#ededed,#dddddd);border:1px solid #c4c4c4;border-bottom:none;box-sizing:border-box"></div>
<span style="left:691.7px;top:456.78px;color:#2a2a2a;font-family:'Liberation Sans',sans-serif;font-size:9px;line-height:9px;transform:scaleX(0.8994);transform-origin:0 0;">CppCheck/Vera++ messages</span>
<svg style="left:820px;top:459px" width="6" height="6" viewBox="0 0 6 6"><path d="M0.5 0.5L5.5 5.5M5.5 0.5L0.5 5.5" stroke="#777" stroke-width="1"/></svg>
<div style="left:830px;top:454px;width:64px;height:16px;background:linear-gradient(#ededed,#dddddd);border:1px solid #c4c4c4;border-bottom:none;box-sizing:border-box"></div>
<span style="left:847px;top:456.78px;color:#2a2a2a;font-family:'Liberation Sans',sans-serif;font-size:9px;line-height:9px;transform:scaleX(0.8520);transform-origin:0 0;">Cscope</span>
<svg style="left:885px;top:459px" width="6" height="6" viewBox="0 0 6 6"><path d="M0.5 0.5L5.5 5.5M5.5 0.5L0.5 5.5" stroke="#777" stroke-width="1"/></svg>
<div style="left:895px;top:454px;width:76px;height:16px;background:linear-gradient(#ededed,#dddddd);border:1px solid #c4c4c4;border-bottom:none;box-sizing:border-box"></div>
<span style="left:912.8px;top:456.78px;color:#2a2a2a;font-family:'Liberation Sans',sans-serif;font-size:9px;line-height:9px;transform:scaleX(0.9056);transform-origin:0 0;">Debugger</span>
<svg style="left:963px;top:459px" width="6" height="6" viewBox="0 0 6 6"><path d="M0.5 0.5L5.5 5.5M5.5 0.5L0.5 5.5" stroke="#777" stroke-width="1"/></svg>
<div style="left:972px;top:454px;width:83px;height:16px;background:linear-gradient(#ededed,#dddddd);border:1px solid #c4c4c4;border-bottom:none;box-sizing:border-box"></div>
<span style="left:988.9px;top:456.78px;color:#2a2a2a;font-family:'Liberation Sans',sans-serif;font-size:9px;line-height:9px;transform:scaleX(0.8742);transform-origin:0 0;">DoxyBlocks</span>
<svg style="left:1045px;top:459px" width="6" height="6" viewBox="0 0 6 6"><path d="M0.5 0.5L5.5 5.5M5.5 0.5L0.5 5.5" stroke="#777" stroke-width="1"/></svg>
<div style="left:1056px;top:454px;width:24px;height:16px;background:linear-gradient(#ededed,#dddddd);border:1px solid #c4c4c4;border-bottom:none;box-sizing:border-box"></div>
<svg style="left:145px;top:459px" width="4" height="6" viewBox="0 0 4 6"><path d="M4 0L0 3L4 6Z" fill="#777"/></svg>
<svg style="left:1071px;top:458px" width="5" height="7" viewBox="0 0 5 7"><path d="M0 0L5 3.5L0 7Z" fill="#111"/></svg>
<div style="left:143px;top:471px;width:922px;height:78px;background:#fff"></div>
<div style="left:143px;top:471px;width:922px;height:17px;background:linear-gradient(#fdfdfd,#f2f2f2);border-bottom:1px solid #e4e4e4;box-sizing:border-box"></div>
<div style="left:229px;top:472px;width:1px;height:15px;background:#e0e0e0"></div>
<div style="left:261px;top:472px;width:1px;height:15px;background:#e0e0e0"></div>
<div style="left:693px;top:472px;width:1px;height:15px;background:#e0e0e0"></div>
<span style="left:147.7px;top:477.78px;color:#3a3a3a;font-family:'Liberation Mono',monospace;font-size:7.85px;line-height:7.85px;font-weight:bold;">File</span>
<span style="left:234.5px;top:477.78px;color:#3a3a3a;font-family:'Liberation Mono',monospace;font-size:7.85px;line-height:7.85px;font-weight:bold;">Line</span>
<span style="left:266.5px;top:477.78px;color:#3a3a3a;font-family:'Liberation Mono',monospace;font-size:7.85px;line-height:7.85px;font-weight:bold;">Message</span>
<div style="left:144px;top:488px;width:549px;height:13px;background:#efefef"></div>
<span style="left:266.5px;top:491.78px;color:#2a2a2a;font-family:'Liberation Mono',monospace;font-size:7.85px;line-height:7.85px;">=== Build: Debug in PHFS (compiler: GNU GCC Compiler) ===</span>
<span style="left:147.5px;top:503.83px;color:#2a2a2a;font-family:'Liberation Mono',monospace;font-size:7.85px;line-height:7.85px;">D:\PHFS\main.cpp</span>
<span style="left:266.5px;top:503.83px;color:#2a2a2a;font-family:'Liberation Mono',monospace;font-size:7.85px;line-height:7.85px;">In function &#x27;void GameOver()&#x27;:</span>
<span style="left:147.5px;top:515.88px;color:#4646c0;font-family:'Liberation Mono',monospace;font-size:7.85px;line-height:7.85px;font-weight:bold;font-style:italic;">D:\PHFS\main.cpp</span>
<span style="left:234.5px;top:515.88px;color:#4646c0;font-family:'Liberation Mono',monospace;font-size:7.85px;line-height:7.85px;font-weight:bold;font-style:italic;">608</span>
<span style="left:266.5px;top:515.88px;color:#4646c0;font-family:'Liberation Mono',monospace;font-size:7.85px;line-height:7.85px;font-weight:bold;font-style:italic;">warning: unknown conversion type character &#x27;l&#x27; in format</span>
<span style="left:147.5px;top:527.93px;color:#4646c0;font-family:'Liberation Mono',monospace;font-size:7.85px;line-height:7.85px;font-weight:bold;font-style:italic;">D:\PHFS\main.cpp</span>
<span style="left:234.5px;top:527.93px;color:#4646c0;font-family:'Liberation Mono',monospace;font-size:7.85px;line-height:7.85px;font-weight:bold;font-style:italic;">608</span>
<span style="left:266.5px;top:527.93px;color:#4646c0;font-family:'Liberation Mono',monospace;font-size:7.85px;line-height:7.85px;font-weight:bold;font-style:italic;">warning: too many arguments for format</span>
<span style="left:147.5px;top:539.98px;color:#4646c0;font-family:'Liberation Mono',monospace;font-size:7.85px;line-height:7.85px;font-weight:bold;font-style:italic;">D:\PHFS\main.cpp</span>
<span style="left:234.5px;top:539.98px;color:#4646c0;font-family:'Liberation Mono',monospace;font-size:7.85px;line-height:7.85px;font-weight:bold;font-style:italic;">610</span>
<span style="left:266.5px;top:539.98px;color:#4646c0;font-family:'Liberation Mono',monospace;font-size:7.85px;line-height:7.85px;font-weight:bold;font-style:italic;">warning: unknown conversion type character &#x27;l&#x27; in format</span>
<div style="left:1065px;top:471px;width:13px;height:78px;background:#f0f0f0;border-left:1px solid #e0e0e0;box-sizing:border-box"></div>
<svg style="left:1068px;top:478px" width="6" height="4" viewBox="0 0 6 4"><path d="M0 4L3 0L6 4Z" fill="#444"/></svg>
<svg style="left:1068px;top:541px" width="6" height="4" viewBox="0 0 6 4"><path d="M0 0L3 4L6 0Z" fill="#444"/></svg>
<div style="left:1066px;top:486px;width:10px;height:13px;background:linear-gradient(90deg,#fafafa,#dedede);border:1px solid #b4b4b4;box-sizing:border-box"></div>
<div style="left:138px;top:549px;width:942px;height:1px;background:#bcbcbc"></div>
<div style="left:139.5px;top:450px;width:3px;height:100px;background:linear-gradient(90deg,#b0b0b0,#8a8a8a,#a8a8a8)"></div>
<div style="left:0px;top:550px;width:1080px;height:17px;background:linear-gradient(#f2f2f2,#e8e8e8)"></div>
<div style="left:0px;top:550px;width:1080px;height:1px;background:#a8a8a8"></div>
<span style="left:2px;top:555.6px;color:#222;font-family:'Liberation Sans',sans-serif;font-size:8.5px;line-height:8.5px;transform:scaleX(0.9802);transform-origin:0 0;">D:\PHFS\main.cpp</span>
<div style="left:422px;top:555px;width:75px;height:11px;background:linear-gradient(#fafafa,#ececec);border:1px solid #9a9a9a;box-sizing:border-box"></div>
<span style="left:423.2px;top:555.8px;color:#222;font-family:'Liberation Sans',sans-serif;font-size:8.5px;line-height:8.5px;transform:scaleX(0.9683);transform-origin:0 0;">C/C++</span>
<span style="left:501.2px;top:555.6px;color:#222;font-family:'Liberation Sans',sans-serif;font-size:8.5px;line-height:8.5px;transform:scaleX(0.9774);transform-origin:0 0;">Windows (CR+LF)</span>
<span style="left:585.7px;top:555.6px;color:#222;font-family:'Liberation Sans',sans-serif;font-size:8.5px;line-height:8.5px;transform:scaleX(1.0053);transform-origin:0 0;">WINDOWS-936</span>
<span style="left:664.7px;top:555.6px;color:#222;font-family:'Liberation Sans',sans-serif;font-size:8.5px;line-height:8.5px;transform:scaleX(0.9909);transform-origin:0 0;">Line 553, Col 40, Pos 18624</span>
<span style="left:815.5px;top:555.6px;color:#222;font-family:'Liberation Sans',sans-serif;font-size:8.5px;line-height:8.5px;transform:scaleX(1.0486);transform-origin:0 0;">Insert</span>
<span style="left:908.6px;top:555.6px;color:#222;font-family:'Liberation Sans',sans-serif;font-size:8.5px;line-height:8.5px;transform:scaleX(1.0435);transform-origin:0 0;">Read/Write</span>
<span style="left:965.3px;top:555.6px;color:#222;font-family:'Liberation Sans',sans-serif;font-size:8.5px;line-height:8.5px;transform:scaleX(1.0340);transform-origin:0 0;">default</span>
<div style="left:812px;top:553px;width:1px;height:14px;background:#e0e0e0"></div>
<div style="left:860.5px;top:553px;width:1px;height:14px;background:#e0e0e0"></div>
<div style="left:906px;top:553px;width:1px;height:14px;background:#e0e0e0"></div>
<div style="left:962px;top:553px;width:1px;height:14px;background:#e0e0e0"></div>
<svg style="left:9.5px;top:18px" width="12" height="12" viewBox="0 0 12 12"><path d="M1.5 1.5H6.5L8.5 3.5V10.5H1.5Z" fill="#fbfbfb" stroke="#8a90a8"/><circle cx="7.5" cy="2.8" r="1.8" fill="#d8d040"/></svg>
<svg style="left:23.5px;top:18px" width="12" height="12" viewBox="0 0 12 12"><path d="M0.5 2.5H4L5 3.5H9.5V10H0.5Z" fill="#3a82d6"/><path d="M2 5.5H11.5L9.5 10H0.5Z" fill="#4e9ae8"/><path d="M3 4H8V8H3Z" fill="#d8ecfa"/></svg>
<svg style="left:39.5px;top:18px" width="12" height="12" viewBox="0 0 12 12"><rect x="0.5" y="1" width="9.5" height="9.5" rx="1" fill="#5e5e5e"/><rect x="2.5" y="1.5" width="5.5" height="3.5" fill="#d0d0d0"/><rect x="2.5" y="6.5" width="5.5" height="3" fill="#9a9a9a"/></svg>
<svg style="left:55px;top:18px" width="12" height="12" viewBox="0 0 12 12"><path d="M1 3L4 0.5H11L10 3Z" fill="#6a7aa0"/><path d="M1 3H10V10.5H1Z" fill="#4a5a82"/><path d="M10 3L11 0.5V8.5L10 10.5Z" fill="#39466a"/><rect x="3" y="4.5" width="5" height="2" fill="#b8c4dc"/><rect x="3" y="7.5" width="5" height="2" fill="#8090b0"/></svg>
<svg style="left:76.5px;top:18px" width="12" height="12" viewBox="0 0 12 12"><path d="M1 4L4.5 1V3C8 3 9.5 5 9 8.5L8 8C8 6 6.5 5.2 4.5 5.2V7Z" fill="#34a43a"/><path d="M4.5 5.2C6.5 5.2 8 6 8 8L9 8.5C9 9 8.5 9.5 8 9.5H5Z" fill="#1e7a2a"/></svg>
<svg style="left:92.5px;top:18px" width="12" height="12" viewBox="0 0 12 12"><path d="M10 5L6 1V3C2.5 3 0.5 4.5 1 9L3 9C3 7 4 6.2 6 6.2V9Z" fill="#8a8a8a"/></svg>
<svg style="left:113.5px;top:18px" width="12" height="12" viewBox="0 0 12 12"><path d="M2 1L8 9M8 1L2 9" stroke="#9a9a9a" stroke-width="2"/><circle cx="2.5" cy="9.5" r="1.6" fill="none" stroke="#8a8a8a" stroke-width="1.2"/><circle cx="7.5" cy="9.5" r="1.6" fill="none" stroke="#8a8a8a" stroke-width="1.2"/></svg>
<svg style="left:128.5px;top:18px" width="12" height="12" viewBox="0 0 12 12"><rect x="0.5" y="1" width="6" height="7" fill="#9a9a9a"/><rect x="3.5" y="3" width="6" height="7.5" fill="#7e7e7e"/></svg>
<svg style="left:144px;top:18px" width="12" height="12" viewBox="0 0 12 12"><path d="M0.5 3Q0.5 1 3 1H7Q9.5 1 9.5 3V10.5H0.5Z" fill="#e2c660"/><rect x="4.5" y="4" width="5.5" height="6.5" fill="#b8b8c8" stroke="#7a7a88" stroke-width="0.8"/></svg>
<svg style="left:165px;top:18px" width="12" height="12" viewBox="0 0 12 12"><circle cx="4.5" cy="4.5" r="3.3" fill="#d8f0f6" stroke="#5a98b0" stroke-width="1.3"/><path d="M7 7L10 10" stroke="#8a9040" stroke-width="2.4" stroke-linecap="round"/></svg>
<svg style="left:181px;top:18px" width="12" height="12" viewBox="0 0 12 12"><circle cx="4.5" cy="4.5" r="3.3" fill="#e07060" stroke="#70a8c0" stroke-width="1"/><path d="M7 7L10 10" stroke="#9a9040" stroke-width="2.4" stroke-linecap="round"/></svg>
<svg style="left:204px;top:18px" width="12" height="12" viewBox="0 0 12 12"><circle cx="5" cy="5.5" r="4.2" fill="#cbb845" stroke="#a89530" stroke-width="1.2" stroke-dasharray="1.6 1"/><circle cx="5" cy="5.5" r="2.6" fill="#e8dc80"/><circle cx="5" cy="5.5" r="1" fill="#a89530"/></svg>
<svg style="left:220px;top:18px" width="12" height="12" viewBox="0 0 12 12"><path d="M1 1L9 5.5L1 10Z" fill="#26a02a"/><path d="M1 1L9 5.5L1 5.5Z" fill="#48c84a"/></svg>
<svg style="left:234.5px;top:18px" width="12" height="12" viewBox="0 0 12 12"><circle cx="3.5" cy="3.5" r="2.8" fill="#c8b848" stroke="#a09030" stroke-width="0.8"/><path d="M3.5 3.5L10 7L3.5 10.8Z" fill="#2aa22e"/></svg>
<svg style="left:250px;top:18px" width="12" height="12" viewBox="0 0 12 12"><path d="M0.5 5.5L5.5 1.5L11 5.5L5.5 9.5Z" fill="#3a7ed0"/><path d="M3 5.5L5.5 3.5L8 5.5L5.5 7.5Z" fill="#cde4fa"/></svg>
<svg style="left:266.5px;top:18px" width="12" height="12" viewBox="0 0 12 12"><rect x="0.5" y="1" width="8" height="8.5" rx="1" fill="#a8a8a8"/><path d="M2.5 3L6.5 7.5M6.5 3L2.5 7.5" stroke="#c8c8c8" stroke-width="1"/></svg>
<svg style="left:374px;top:18px" width="12" height="12" viewBox="0 0 12 12"><rect x="0.5" y="0.5" width="8" height="10" fill="#f4f4f4" stroke="#555" stroke-width="1"/><path d="M2 3H7M2 5H7M2 7H7" stroke="#888"/><circle cx="7.5" cy="8" r="2.3" fill="#d0c030"/></svg>
<svg style="left:397px;top:18px" width="12" height="12" viewBox="0 0 12 12"><path d="M1 1L8.5 5.5L1 10Z" fill="#d02838"/></svg>
<svg style="left:411px;top:18px" width="12" height="12" viewBox="0 0 12 12"><path d="M1.5 0.5V4L4 7L6 5L3 2" stroke="#d09030" stroke-width="1.6" fill="none"/><rect x="6.5" y="1" width="4.5" height="2" fill="#444"/><rect x="6.5" y="4.5" width="4.5" height="2" fill="#6a6ad0"/><rect x="6.5" y="8" width="4.5" height="2" fill="#444"/></svg>
<svg style="left:427px;top:18px" width="12" height="12" viewBox="0 0 12 12"><path d="M5 2L2.5 5L5 8" stroke="#9a9a9a" stroke-width="1.8" fill="none"/><circle cx="4" cy="8" r="1.5" fill="#aaa"/><rect x="7" y="2.5" width="4" height="2" fill="#666"/><rect x="7" y="6.5" width="4" height="2" fill="#7a7a88"/></svg>
<svg style="left:443px;top:18px" width="12" height="12" viewBox="0 0 12 12"><path d="M1.5 0.5V4L4 7L6 5L3 2" stroke="#d09030" stroke-width="1.6" fill="none"/><rect x="7.5" y="1.5" width="3.5" height="2" fill="#555"/><rect x="7.5" y="8" width="3.5" height="2" fill="#555"/></svg>
<svg style="left:458px;top:18px" width="12" height="12" viewBox="0 0 12 12"><path d="M1 9L5 5L8 6" stroke="#8a8a8a" stroke-width="1.8" fill="none"/><circle cx="2.5" cy="9" r="1.3" fill="#888"/><rect x="7.5" y="1.5" width="3.5" height="2" fill="#666"/><rect x="7.5" y="7" width="3.5" height="2" fill="#666"/></svg>
<svg style="left:474px;top:18px" width="12" height="12" viewBox="0 0 12 12"><path d="M5.5 1.5L2 5L5.5 8.5" stroke="#909090" stroke-width="2" fill="none"/><circle cx="8.5" cy="3" r="1.1" fill="#777"/><circle cx="8.5" cy="7.5" r="1.1" fill="#777"/></svg>
<svg style="left:489px;top:18px" width="12" height="12" viewBox="0 0 12 12"><path d="M2.5 1V5L5 7.5L7 5.5" stroke="#a0a0a0" stroke-width="1.8" fill="none"/><circle cx="8" cy="2" r="0.9" fill="#999"/><circle cx="7" cy="9" r="1" fill="#999"/></svg>
<svg style="left:505px;top:18px" width="12" height="12" viewBox="0 0 12 12"><rect x="1" y="1" width="2.5" height="9" fill="#a8a8a8"/><rect x="5.5" y="1" width="2.5" height="9" fill="#a8a8a8"/></svg>
<svg style="left:520.5px;top:18px" width="12" height="12" viewBox="0 0 12 12"><rect x="0.5" y="1" width="8.5" height="8.5" rx="1" fill="#a4a4a4"/><path d="M2.5 3L7 7.5M7 3L2.5 7.5" stroke="#c4c4c4" stroke-width="1"/></svg>
<svg style="left:541px;top:18px" width="12" height="12" viewBox="0 0 12 12"><rect x="0.5" y="0.5" width="10.5" height="9" fill="#f8f8f8" stroke="#406ab0" stroke-width="1"/><rect x="0.5" y="0.5" width="10.5" height="1.8" fill="#3060b0"/><circle cx="4.5" cy="5.5" r="2" fill="#e08a30"/><path d="M8 9.5L9.5 11L11 9.5Z" fill="#333"/></svg>
<svg style="left:556.5px;top:18px" width="12" height="12" viewBox="0 0 12 12"><rect x="0" y="0.5" width="10.5" height="9.5" fill="#a0a0a4"/></svg>
<div style="left:70px;top:17px;width:1px;height:12px;background:#b4b6bc"></div>
<div style="left:107px;top:17px;width:1px;height:12px;background:#b4b6bc"></div>
<div style="left:159px;top:17px;width:1px;height:12px;background:#b4b6bc"></div>
<div style="left:535px;top:17px;width:1px;height:12px;background:#b4b6bc"></div>
<svg style="left:197px;top:17px" width="2" height="12" viewBox="0 0 2 12"><rect x="0" y="0" width="2" height="1.2" fill="#8e9098"/><rect x="0" y="3" width="2" height="1.2" fill="#8e9098"/><rect x="0" y="6" width="2" height="1.2" fill="#8e9098"/><rect x="0" y="9" width="2" height="1.2" fill="#8e9098"/></svg>
<svg style="left:387px;top:17px" width="2" height="12" viewBox="0 0 2 12"><rect x="0" y="0" width="2" height="1.2" fill="#8e9098"/><rect x="0" y="3" width="2" height="1.2" fill="#8e9098"/><rect x="0" y="6" width="2" height="1.2" fill="#8e9098"/><rect x="0" y="9" width="2" height="1.2" fill="#8e9098"/></svg>
<div style="left:280px;top:15.5px;width:91px;height:15px;background:linear-gradient(#fcfcfc,#e6e6e6);border:1px solid #a0a0a0;border-radius:2px;box-sizing:border-box"></div>
<svg style="left:363px;top:22px" width="5" height="3" viewBox="0 0 5 3"><path d="M0 0H5L2.5 3Z" fill="#111"/></svg>
<span style="left:282.5px;top:19.72px;color:#222;font-family:'Liberation Sans',sans-serif;font-size:8.6px;line-height:8.6px;transform:scaleX(0.8883);transform-origin:0 0;">Debug</span>
<svg style="left:650px;top:34.5px" width="12" height="12" viewBox="0 0 12 12"><path d="M0.5 5L5 1.5V3.5H10V6.5H5V8.5Z" fill="#38b040"/><path d="M5 3.5H10V5H0.5L5 1.5Z" fill="#70d070"/></svg>
<svg style="left:666.5px;top:34.5px" width="12" height="12" viewBox="0 0 12 12"><path d="M10 5L5.5 1.5V3.5H0.5V6.5H5.5V8.5Z" fill="#8c8c8c"/></svg>
<svg style="left:688px;top:34.5px" width="12" height="12" viewBox="0 0 12 12"><rect x="1" y="0.5" width="1.6" height="10" fill="#d09030"/><path d="M2.6 1H9.5L8 4L9.5 7H2.6Z" fill="#e04840"/></svg>
<svg style="left:703px;top:34.5px" width="12" height="12" viewBox="0 0 12 12"><rect x="1" y="0.5" width="1.6" height="10" fill="#888"/><path d="M2.6 1H9.5L8 4L9.5 7H2.6Z" fill="#8a8a8a"/><path d="M5 5L9.5 8L5 10.5Z" fill="#666"/></svg>
<svg style="left:718.5px;top:34.5px" width="12" height="12" viewBox="0 0 12 12"><rect x="1" y="0.5" width="1.6" height="10" fill="#888"/><path d="M2.6 1H9.5L8 4L9.5 7H2.6Z" fill="#8a8a8a"/><path d="M5 5L9.5 8L5 10.5Z" fill="#666"/></svg>
<svg style="left:733px;top:34.5px" width="12" height="12" viewBox="0 0 12 12"><rect x="1" y="0.5" width="1.6" height="10" fill="#777"/><path d="M2.6 1H9.5L8 4L9.5 7H2.6Z" fill="#7a7a7a"/><path d="M5 6L10 10M10 6L5 10" stroke="#444" stroke-width="1.5"/></svg>
<svg style="left:757px;top:34.5px" width="12" height="12" viewBox="0 0 12 12"><ellipse cx="5.5" cy="4" rx="4" ry="3" fill="#9a9a9a"/><rect x="1" y="6" width="9" height="3" fill="#7a7a7a"/></svg>
<svg style="left:773px;top:34.5px" width="12" height="12" viewBox="0 0 12 12"><circle cx="3" cy="2.5" r="2" fill="#e04040"/><rect x="4" y="0.5" width="3" height="3" fill="#40a040"/><path d="M3 3L10.5 7L3 11Z" fill="#28a030"/></svg>
<svg style="left:829px;top:34.5px" width="12" height="12" viewBox="0 0 12 12"><rect x="0.5" y="0.5" width="10" height="10" fill="#eef6fc" stroke="#90a8c0"/><path d="M2.5 5.5L5 3.5V4.7H8.5V6.3H5V7.5Z" fill="#2a6ac8"/></svg>
<svg style="left:845px;top:34.5px" width="12" height="12" viewBox="0 0 12 12"><rect x="0.5" y="0.5" width="10" height="10.5" fill="#f8f8e8" stroke="#606060"/><text x="5.5" y="9.5" font-family="Liberation Sans" font-weight="bold" font-size="10" text-anchor="middle" fill="#c8b820">?</text></svg>
<svg style="left:866px;top:34.5px" width="12" height="12" viewBox="0 0 12 12"><path d="M2 3L4 1L4 3.5L5.5 5L10 9.5L9 10.5L4.5 6L2.5 6Z" fill="none" stroke="#a8a8a8" stroke-width="1.2"/></svg>
<svg style="left:890px;top:34.5px" width="12" height="12" viewBox="0 0 12 12"><path d="M0.5 5L4 2V8Z" fill="#a4a4ac"/><rect x="4" y="4" width="2" height="2" fill="#a4a4ac"/><rect x="6" y="0.5" width="1.6" height="10" fill="#a4a4ac"/></svg>
<svg style="left:907px;top:34.5px" width="12" height="12" viewBox="0 0 12 12"><circle cx="3" cy="5" r="2.4" fill="#a8a8ae"/></svg>
<svg style="left:920px;top:34.5px" width="12" height="12" viewBox="0 0 12 12"><rect x="0.5" y="0.5" width="1.6" height="10" fill="#a4a4ac"/><rect x="2" y="4" width="2.5" height="2" fill="#a4a4ac"/><path d="M9 5L4.5 2V8Z" fill="#a4a4ac"/></svg>
<div style="left:681px;top:34px;width:1px;height:12px;background:#b4b6bc"></div>
<div style="left:787px;top:34px;width:1px;height:12px;background:#b4b6bc"></div>
<div style="left:823px;top:34px;width:1px;height:12px;background:#b4b6bc"></div>
<div style="left:861px;top:34px;width:1px;height:12px;background:#b4b6bc"></div>
<svg style="left:750px;top:34px" width="2" height="12" viewBox="0 0 2 12"><rect x="0" y="0" width="2" height="1.2" fill="#8e9098"/><rect x="0" y="3" width="2" height="1.2" fill="#8e9098"/><rect x="0" y="6" width="2" height="1.2" fill="#8e9098"/><rect x="0" y="9" width="2" height="1.2" fill="#8e9098"/></svg>
<svg style="left:883px;top:34px" width="2" height="12" viewBox="0 0 2 12"><rect x="0" y="0" width="2" height="1.2" fill="#8e9098"/><rect x="0" y="3" width="2" height="1.2" fill="#8e9098"/><rect x="0" y="6" width="2" height="1.2" fill="#8e9098"/><rect x="0" y="9" width="2" height="1.2" fill="#8e9098"/></svg>
<span style="left:793px;top:36.88px;color:#333;font-family:'Liberation Sans',sans-serif;font-size:9px;line-height:9px;font-weight:bold;transform:scaleX(1.0509);transform-origin:0 0;">/**</span>
<span style="left:809px;top:36.03px;color:#222;font-family:'Liberation Sans',sans-serif;font-size:10px;line-height:10px;font-weight:bold;transform:scaleX(1.0273);transform-origin:0 0;">*&lt;</span>
<svg style="left:8px;top:51px" width="12" height="12" viewBox="0 0 12 12"><path d="M0.5 1.5H6.5L10 5.5L6.5 9.5H0.5Z" fill="#b4b4b8"/><circle cx="4" cy="5.5" r="1.2" fill="#e8e8e8"/></svg>
<svg style="left:139px;top:51px" width="12" height="12" viewBox="0 0 12 12"><path d="M0.5 4.5L3.5 1.5V3H8.5V6H3.5V7.5Z" fill="#8c96a4"/></svg>
<svg style="left:154px;top:51px" width="12" height="12" viewBox="0 0 12 12"><path d="M9 4.5L6 1.5V3H0.5V6H6V7.5Z" fill="#8c96a4"/></svg>
<svg style="left:172px;top:51px" width="12" height="12" viewBox="0 0 12 12"><path d="M4 7L8.5 0.5L10 1.5L5.5 8Z" fill="#e0a040"/><rect x="0" y="8.5" width="10" height="2" fill="#d83040"/></svg>
<svg style="left:185px;top:51px" width="12" height="12" viewBox="0 0 12 12"><rect x="1" y="2" width="9" height="7" rx="2" fill="#5a84b8"/><rect x="4.5" y="0.5" width="2" height="10" fill="#2e5c98"/></svg>
<svg style="left:200px;top:51px" width="12" height="12" viewBox="0 0 12 12"><text x="0" y="9" font-family="Liberation Sans" font-weight="bold" font-size="9.5" fill="#3a6ab8">Aa</text></svg>
<svg style="left:216px;top:51px" width="12" height="12" viewBox="0 0 12 12"><circle cx="1.5" cy="8.5" r="1" fill="#444"/><path d="M5 3H8M6.5 1.5V4.5" stroke="#888" stroke-width="0.8"/></svg>
<svg style="left:238px;top:51px" width="12" height="12" viewBox="0 0 12 12"><path d="M2 0.5V9L4 7L6 10.5L7 10L5 6.5H8Z" fill="#e8eaf0" stroke="#c0c4cc" stroke-width="0.8"/></svg>
<svg style="left:259.5px;top:51px" width="12" height="12" viewBox="0 0 12 12"><rect x="0.5" y="2.5" width="10" height="6" fill="#f0f0f4" stroke="#b0b0b8"/></svg>
<svg style="left:280px;top:51px" width="12" height="12" viewBox="0 0 12 12"><rect x="0.5" y="0.5" width="10" height="10" fill="#f4f4f4" stroke="#a8a8a8"/><rect x="1.5" y="5" width="8" height="5" fill="#a0a0a0"/><path d="M2 2L5 4L8 2" stroke="#999" fill="none"/></svg>
<svg style="left:296px;top:51px" width="12" height="12" viewBox="0 0 12 12"><rect x="0.5" y="0.5" width="10" height="10" fill="#f4f4f4" stroke="#a8a8a8"/><rect x="2.5" y="2.5" width="6" height="7" fill="#e0e0e0" stroke="#999" stroke-width="0.8"/><path d="M5.5 3V7" stroke="#888"/></svg>
<svg style="left:316px;top:51px" width="12" height="12" viewBox="0 0 12 12"><rect x="0.5" y="2.5" width="10.5" height="6.5" fill="#b8b8bc"/><rect x="0.5" y="2.5" width="10.5" height="2" fill="#8e8e92"/><rect x="2" y="5.5" width="7.5" height="2" fill="#d4d4d8"/></svg>
<svg style="left:332px;top:51px" width="12" height="12" viewBox="0 0 12 12"><rect x="0.5" y="2" width="10.5" height="7" fill="#d8d8dc" stroke="#9a9a9e" stroke-width="0.8"/><rect x="1" y="2.5" width="9.5" height="2.5" fill="#8a8a8e"/></svg>
<svg style="left:349px;top:51px" width="12" height="12" viewBox="0 0 12 12"><rect x="0.5" y="2" width="10.5" height="7" fill="#e0e0e4" stroke="#9a9a9e" stroke-width="0.8"/><rect x="2" y="4" width="7.5" height="2.5" fill="#7e7e82"/></svg>
<svg style="left:363.5px;top:51px" width="12" height="12" viewBox="0 0 12 12"><rect x="0.5" y="1" width="10.5" height="9" fill="#9a9a9e"/><rect x="2" y="2.5" width="7.5" height="6" fill="#7a7a7e"/></svg>
<svg style="left:384px;top:51px" width="12" height="12" viewBox="0 0 12 12"><rect x="0.5" y="2.5" width="10.5" height="6" rx="1" fill="#f4f4f8" stroke="#a8acb4"/></svg>
<svg style="left:399px;top:51px" width="12" height="12" viewBox="0 0 12 12"><rect x="0.5" y="2.5" width="10.5" height="6" rx="1" fill="#f4f4f8" stroke="#a8acb4"/></svg>
<svg style="left:414.5px;top:51px" width="12" height="12" viewBox="0 0 12 12"><rect x="0.5" y="2.5" width="10.5" height="6" rx="1" fill="#f4f4f8" stroke="#a8acb4"/></svg>
<svg style="left:435px;top:51px" width="12" height="12" viewBox="0 0 12 12"><circle cx="4.5" cy="4.5" r="3.4" fill="#f0f0f4" stroke="#a8a8b0" stroke-width="1.1"/><path d="M3 4.5H6M4.5 3V6" stroke="#a0a0a8"/><path d="M7 7L10 10" stroke="#a8a8b0" stroke-width="1.8"/></svg>
<svg style="left:450px;top:51px" width="12" height="12" viewBox="0 0 12 12"><circle cx="4.5" cy="4.5" r="3.4" fill="#f0f0f4" stroke="#a8a8b0" stroke-width="1.1"/><path d="M3 4.5H6" stroke="#a0a0a8"/><path d="M7 7L10 10" stroke="#a8a8b0" stroke-width="1.8"/></svg>
<svg style="left:473px;top:51px" width="12" height="12" viewBox="0 0 12 12"><text x="0.5" y="9.5" font-family="Liberation Sans" font-weight="bold" font-size="10.5" fill="#9a9aa2">S</text></svg>
<svg style="left:487px;top:51px" width="12" height="12" viewBox="0 0 12 12"><text x="0" y="10" font-family="Liberation Serif" font-weight="bold" font-size="12" fill="#c4c6cc">C</text></svg>
<svg style="left:600px;top:51px" width="12" height="12" viewBox="0 0 12 12"><circle cx="4.5" cy="4" r="3.2" fill="#e4f4fa" stroke="#6aa8c8" stroke-width="1.1"/><path d="M1 9H6" stroke="#444" stroke-width="1.5" stroke-dasharray="1 0.6"/><path d="M7 7L10 10" stroke="#b8a070" stroke-width="1.8"/></svg>
<svg style="left:614px;top:51px" width="12" height="12" viewBox="0 0 12 12"><path d="M1 1.5L3.5 0.5L4.5 3L7 5.5" stroke="#707080" stroke-width="1.8" fill="none"/><path d="M6 5L10 9" stroke="#d02030" stroke-width="2.8" stroke-linecap="round"/></svg>
<div style="left:253px;top:51px;width:1px;height:12px;background:#b4b6bc"></div>
<div style="left:275px;top:51px;width:1px;height:12px;background:#b4b6bc"></div>
<div style="left:310px;top:51px;width:1px;height:12px;background:#b4b6bc"></div>
<div style="left:378px;top:51px;width:1px;height:12px;background:#b4b6bc"></div>
<div style="left:430px;top:51px;width:1px;height:12px;background:#b4b6bc"></div>
<div style="left:466px;top:51px;width:1px;height:12px;background:#b4b6bc"></div>
<svg style="left:232px;top:51px" width="2" height="12" viewBox="0 0 2 12"><rect x="0" y="0" width="2" height="1.2" fill="#8e9098"/><rect x="0" y="3" width="2" height="1.2" fill="#8e9098"/><rect x="0" y="6" width="2" height="1.2" fill="#8e9098"/><rect x="0" y="9" width="2" height="1.2" fill="#8e9098"/></svg>
<svg style="left:4.5px;top:98.5px" width="12" height="12" viewBox="0 0 12 12"><defs><radialGradient id="wsg" cx="0.4" cy="0.3" r="0.7"><stop offset="0" stop-color="#9cd0ff"/><stop offset="1" stop-color="#1c64c0"/></radialGradient></defs><circle cx="5.5" cy="5.5" r="5.3" fill="url(#wsg)"/><path d="M2.5 5.8L5.5 2.8L8.5 5.8H7.6V8.4H3.4V5.8Z" fill="#fff"/></svg>
<svg style="left:17.8px;top:112px" width="12" height="12" viewBox="0 0 12 12"><rect x="0" y="0" width="5" height="5" fill="#e01010"/><rect x="5" y="0" width="5.5" height="5" fill="#18c018"/><rect x="0" y="5" width="5" height="5.5" fill="#f0e020"/><rect x="5" y="5" width="5.5" height="5.5" fill="#1018d0"/></svg>
<svg style="left:30px;top:127px" width="12" height="12" viewBox="0 0 12 12"><path d="M0.5 1H4L5 2H9.5V7H0.5Z" fill="#2a70c8"/><path d="M1.5 3H11L9.5 7H0.5Z" fill="#5a9ae0"/><path d="M2.5 3.8H8.5V6H2.5Z" fill="#cce2f8"/></svg>
<svg style="left:44.5px;top:139px" width="12" height="12" viewBox="0 0 12 12"><path d="M0.5 0.5H5.5L8.5 3.5V10.5H0.5Z" fill="#fafafa" stroke="#b8bcc8"/><path d="M5.5 0.5V3.5H8.5" fill="#e0e4ec" stroke="#b8bcc8"/></svg>
<svg style="left:6px;top:108px" width="40" height="42" viewBox="0 0 40 42"><path d="M4.5 1V6M7.5 11H11.5M17.5 13V19M20 22.5H24M36.5 25V35H39" stroke="#b8b8b8" stroke-width="1" fill="none"/></svg>
<div style="left:7.5px;top:114.5px;width:6px;height:6px;background:#fafafa;border:1px solid #a8a8a8;box-sizing:border-box"></div>
<div style="left:9px;top:117px;width:3px;height:1px;background:#555"></div>
<div style="left:20px;top:128px;width:6px;height:6px;background:#fafafa;border:1px solid #a8a8a8;box-sizing:border-box"></div>
<div style="left:21.5px;top:130.5px;width:3px;height:1px;background:#555"></div>
<svg style="left:158.3px;top:456px" width="12" height="12" viewBox="0 0 12 12"><path d="M1.5 10L3 5L7 0.5L8.5 1.5L5 6.5Z" fill="#f0a020"/><path d="M1.5 10L3 5L4.5 6Z" fill="#e8d8a0"/><path d="M7 0.5L8.5 1.5" stroke="#444" stroke-width="1"/></svg>
<svg style="left:246.5px;top:456px" width="12" height="12" viewBox="0 0 12 12"><circle cx="4.5" cy="4.5" r="3.6" fill="#d4eef8" stroke="#5a9cc0" stroke-width="1.2"/><path d="M7 7L10.5 10.5" stroke="#98a040" stroke-width="2.4" stroke-linecap="round"/></svg>
<svg style="left:341.5px;top:456px" width="12" height="12" viewBox="0 0 12 12"><path d="M1.5 10L3 5L7 0.5L8.5 1.5L5 6.5Z" fill="#f0a020"/><path d="M1.5 10L3 5L4.5 6Z" fill="#e8d8a0"/><path d="M7 0.5L8.5 1.5" stroke="#444" stroke-width="1"/></svg>
<svg style="left:394.5px;top:456px" width="12" height="12" viewBox="0 0 12 12"><circle cx="5.5" cy="5.5" r="5" fill="#2c80d8"/><path d="M2.5 5C3 3 6 2.5 8 3.5" stroke="#fff" stroke-width="1.2" fill="none"/><path d="M8.5 6C8 8 5 8.5 3 7.5" stroke="#fff" stroke-width="1.2" fill="none"/></svg>
<svg style="left:467.5px;top:456px" width="12" height="12" viewBox="0 0 12 12"><circle cx="6" cy="4" r="3.5" fill="#e02838"/><path d="M4 6L1 10" stroke="#888" stroke-width="1.2"/><circle cx="7" cy="3" r="1" fill="#f8a0a8"/></svg>
<svg style="left:565.5px;top:456px" width="12" height="12" viewBox="0 0 12 12"><path d="M1.5 10L3 5L7 0.5L8.5 1.5L5 6.5Z" fill="#f0a020"/><path d="M1.5 10L3 5L4.5 6Z" fill="#e8d8a0"/><path d="M7 0.5L8.5 1.5" stroke="#444" stroke-width="1"/></svg>
<svg style="left:679.2px;top:456px" width="12" height="12" viewBox="0 0 12 12"><path d="M1.5 10L3 5L7 0.5L8.5 1.5L5 6.5Z" fill="#f0a020"/><path d="M1.5 10L3 5L4.5 6Z" fill="#e8d8a0"/><path d="M7 0.5L8.5 1.5" stroke="#444" stroke-width="1"/></svg>
<svg style="left:834.5px;top:456px" width="12" height="12" viewBox="0 0 12 12"><path d="M1.5 10L3 5L7 0.5L8.5 1.5L5 6.5Z" fill="#f0a020"/><path d="M1.5 10L3 5L4.5 6Z" fill="#e8d8a0"/><path d="M7 0.5L8.5 1.5" stroke="#444" stroke-width="1"/></svg>
<svg style="left:900.3px;top:456px" width="12" height="12" viewBox="0 0 12 12"><circle cx="5.5" cy="5.5" r="5" fill="#2c80d8"/><path d="M2.5 5C3 3 6 2.5 8 3.5" stroke="#fff" stroke-width="1.2" fill="none"/><path d="M8.5 6C8 8 5 8.5 3 7.5" stroke="#fff" stroke-width="1.2" fill="none"/></svg>
<svg style="left:976.4px;top:456px" width="12" height="12" viewBox="0 0 12 12"><path d="M1.5 10L3 5L7 0.5L8.5 1.5L5 6.5Z" fill="#f0a020"/><path d="M1.5 10L3 5L4.5 6Z" fill="#e8d8a0"/><path d="M7 0.5L8.5 1.5" stroke="#444" stroke-width="1"/></svg>
<svg style="left:1062px;top:456px" width="12" height="12" viewBox="0 0 12 12"><path d="M1.5 10L3 5L7 0.5L8.5 1.5L5 6.5Z" fill="#f0a020"/><path d="M1.5 10L3 5L4.5 6Z" fill="#e8d8a0"/><path d="M7 0.5L8.5 1.5" stroke="#444" stroke-width="1"/></svg>
<svg style="left:944px;top:524px" width="100" height="27" viewBox="0 0 100 27"><g transform="translate(4.5,1.5) skewX(-5)"><path d="M11.5 1.5L12.5 4.5 M5 6.5H21 M6.5 6.5Q6.5 16 2 22 M26 4.5H44 M33 1L28.5 11.5H43 M36 11.5V22L33.5 21 M30 15.5L26.5 20.5 M39.5 15.5L43.5 20.5 M48 7.5H68 M55 1.5V8Q54 16 48.5 22 M58.5 5V19Q59 21 63 21H67L67.5 16.5 M63.5 1.5L65.5 4 M65 10.5L60.5 14.5 M74.5 22V2.5H92V20L89.5 21.5 M78 8L82.5 16 M82.5 8L78 16 M85 8L89 16 M89 8L85 16" fill="none" stroke="#111" stroke-width="5.8" stroke-linecap="round" stroke-linejoin="round"/><path d="M11.5 1.5L12.5 4.5 M5 6.5H21 M6.5 6.5Q6.5 16 2 22 M26 4.5H44 M33 1L28.5 11.5H43 M36 11.5V22L33.5 21 M30 15.5L26.5 20.5 M39.5 15.5L43.5 20.5 M48 7.5H68 M55 1.5V8Q54 16 48.5 22 M58.5 5V19Q59 21 63 21H67L67.5 16.5 M63.5 1.5L65.5 4 M65 10.5L60.5 14.5 M74.5 22V2.5H92V20L89.5 21.5 M78 8L82.5 16 M82.5 8L78 16 M85 8L89 16 M89 8L85 16" fill="none" stroke="#fff" stroke-width="3.3" stroke-linecap="round" stroke-linejoin="round"/></g></svg>
<svg style="left:1053px;top:555px" width="12" height="9" viewBox="0 0 12 9"><ellipse cx="5.5" cy="4.3" rx="5.2" ry="4" fill="#b02030"/><path d="M3 6V3.5M5 6V3M7.5 6V3.5" stroke="#f4c0c8" stroke-width="1"/></svg>
</body></html>
